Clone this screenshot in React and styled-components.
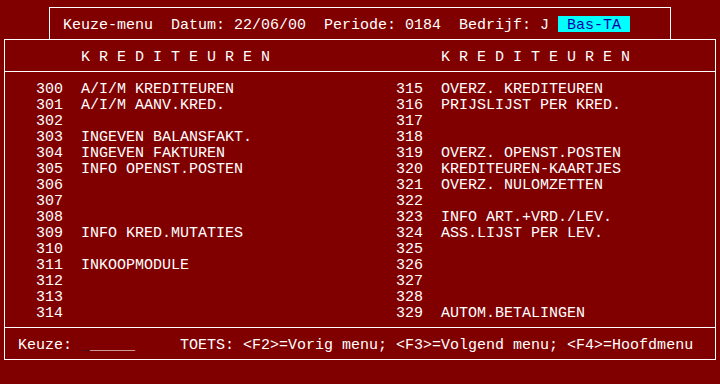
import React from 'react';
import styled, { createGlobalStyle } from 'styled-components';

const GlobalStyle = createGlobalStyle`
	html, body {
		margin: 0;
		padding: 0;
		background: #800000;
	}
	body {
		font-family: 'Liberation Mono', 'Courier New', monospace;
		font-size: 15px;
		color: #ffffff;
	}
`;

// 80x24 text screen: every cell is 9px wide, 16px high
const Screen = styled.div`
	width: 720px;
	height: 384px;
	background: #800000;
	overflow: hidden;
	white-space: pre;
	line-height: 19px;
`;

const TopBox = styled.div`
	box-sizing: border-box;
	margin: 7px 0 0 49px;
	width: 622px;
	height: 32px;
	padding: 8px 0 0 13px;
	border: 1px solid #ffffff;
	border-bottom: none;
	display: flex;
	align-items: flex-start;
`;

const Text = styled.span`
	display: block;
	height: 16px;
`;

const Company = styled.span`
	display: block;
	height: 16px;
	margin-left: 9px;
	padding: 0 9px;
	background: #00ffff;
	color: #0000a8;
`;

const MainBox = styled.div`
	box-sizing: border-box;
	margin-left: 4px;
	width: 712px;
	border: 1px solid #ffffff;
`;

const Section = styled.div`
	display: grid;
	grid-template-columns: 360px 1fr;
	padding: 8px 0 7px ${(p) => p.$indent}px;
	border-bottom: 1px solid #ffffff;
`;

const Footer = styled.div`
	padding: 8px 0 7px 13px;
	height: 16px;
`;

const Column = styled.div`
	display: flex;
	flex-direction: column;
`;

const Row = styled.div`
	display: flex;
	height: 16px;
`;

const Number = styled.span`
	width: 45px;
	flex: none;
`;

const Cursor = styled.span`
	color: #1c1c1c;
`;

const left = [
	['300', 'A/I/M KREDITEUREN'],
	['301', 'A/I/M AANV.KRED.'],
	['302', ''],
	['303', 'INGEVEN BALANSFAKT.'],
	['304', 'INGEVEN FAKTUREN'],
	['305', 'INFO OPENST.POSTEN'],
	['306', ''],
	['307', ''],
	['308', ''],
	['309', 'INFO KRED.MUTATIES'],
	['310', ''],
	['311', 'INKOOPMODULE'],
	['312', ''],
	['313', ''],
	['314', ''],
];

const right = [
	['315', 'OVERZ. KREDITEUREN'],
	['316', 'PRIJSLIJST PER KRED.'],
	['317', ''],
	['318', ''],
	['319', 'OVERZ. OPENST.POSTEN'],
	['320', 'KREDITEUREN-KAARTJES'],
	['321', 'OVERZ. NULOMZETTEN'],
	['322', ''],
	['323', 'INFO ART.+VRD./LEV.'],
	['324', 'ASS.LIJST PER LEV.'],
	['325', ''],
	['326', ''],
	['327', ''],
	['328', ''],
	['329', 'AUTOM.BETALINGEN'],
];

const MenuColumn = ({ items }) => (
	<Column>
		{items.map(([nr, label]) => (
			<Row key={nr}>
				<Number>{nr}</Number>
				<span>{label}</span>
			</Row>
		))}
	</Column>
);

export default function App() {
	const title = 'K R E D I T E U R E N';
	return (
		<>
			<GlobalStyle />
			<Screen>
				<TopBox>
					<Text>Keuze-menu  Datum: 22/06/00  Periode: 0184  Bedrijf: J</Text>
					<Company>Bas-TA</Company>
				</TopBox>
				<MainBox>
					<Section $indent={76}>
						<Text>{title}</Text>
						<Text>{title}</Text>
					</Section>
					<Section $indent={31}>
						<MenuColumn items={left} />
						<MenuColumn items={right} />
					</Section>
					<Footer>
						{'Keuze: '}<Cursor>_</Cursor>{'_____     TOETS: <F2>=Vorig menu; <F3>=Volgend menu; <F4>=Hoofdmenu'}
					</Footer>
				</MainBox>
			</Screen>
		</>
	);
}
